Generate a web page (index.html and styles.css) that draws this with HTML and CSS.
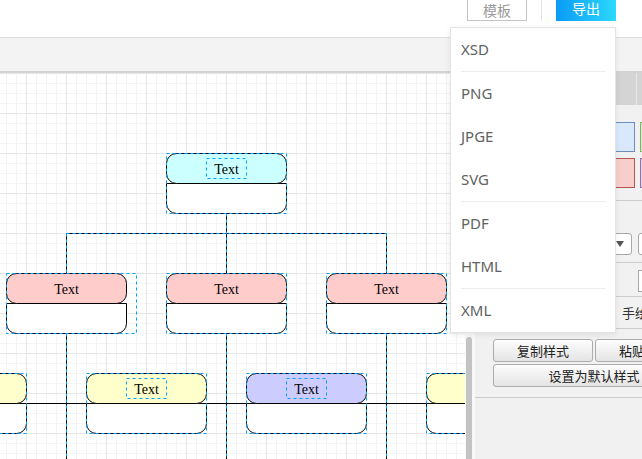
FILE: index.html
```html
<!DOCTYPE html>
<html lang="zh">
<head>
<meta charset="utf-8">
<title>流程图编辑器</title>
<link rel="stylesheet" href="styles.css">
</head>
<body>
<header class="topbar">
  <div class="top-actions">
    <button class="btn-outline">模板</button>
    <span class="vsep"></span>
    <button class="btn-primary">导出</button>
  </div>
  <div class="export-menu">
    <div class="menu-item">XSD</div>
    <div class="menu-sep"></div>
    <div class="menu-item">PNG</div>
    <div class="menu-item">JPGE</div>
    <div class="menu-item">SVG</div>
    <div class="menu-sep"></div>
    <div class="menu-item">PDF</div>
    <div class="menu-item">HTML</div>
    <div class="menu-sep"></div>
    <div class="menu-item">XML</div>
  </div>
</header>
<div class="toolbar"></div>
<main class="main">
  <div class="canvas">
    <svg class="diagram" width="465" height="386" viewBox="0 73 465 386" xmlns="http://www.w3.org/2000/svg">
      <path class="edge" d="M226.5,213.5 V273.5 M66.5,233.5 H386.5 M66.5,233.5 V273.5 M386.5,233.5 V273.5 M66.5,333.5 V460 M226.5,333.5 V460 M386.5,333.5 V460"/>
      <path class="edge-sel" d="M226.5,213.5 V273.5 M66.5,233.5 H386.5 M66.5,233.5 V273.5 M386.5,233.5 V273.5 M66.5,333.5 V460 M226.5,333.5 V460 M386.5,333.5 V460"/>
      <path class="edge" d="M26.5,403.5 H86.5 M206.5,403.5 H246.5 M366.5,403.5 H426.5"/>

      <path class="body" d="M166.5,183.5 H286.5 V203.5 A10,10 0 0 1 276.5,213.5 H176.5 A10,10 0 0 1 166.5,203.5 Z"/>
      <rect class="hdr c-cyan" x="166.5" y="153.5" width="120" height="30" rx="10"/>

      <path class="body" d="M6.5,303.5 H126.5 V323.5 A10,10 0 0 1 116.5,333.5 H16.5 A10,10 0 0 1 6.5,323.5 Z"/>
      <rect class="hdr c-pink" x="6.5" y="273.5" width="120" height="30" rx="10"/>
      <path class="body" d="M166.5,303.5 H286.5 V323.5 A10,10 0 0 1 276.5,333.5 H176.5 A10,10 0 0 1 166.5,323.5 Z"/>
      <rect class="hdr c-pink" x="166.5" y="273.5" width="120" height="30" rx="10"/>
      <path class="body" d="M326.5,303.5 H446.5 V323.5 A10,10 0 0 1 436.5,333.5 H336.5 A10,10 0 0 1 326.5,323.5 Z"/>
      <rect class="hdr c-pink" x="326.5" y="273.5" width="120" height="30" rx="10"/>

      <path class="body" d="M-93.5,403.5 H26.5 V423.5 A10,10 0 0 1 16.5,433.5 H-83.5 A10,10 0 0 1 -93.5,423.5 Z"/>
      <rect class="hdr c-yellow" x="-93.5" y="373.5" width="120" height="30" rx="10"/>
      <path class="body" d="M86.5,403.5 H206.5 V423.5 A10,10 0 0 1 196.5,433.5 H96.5 A10,10 0 0 1 86.5,423.5 Z"/>
      <rect class="hdr c-yellow" x="86.5" y="373.5" width="120" height="30" rx="10"/>
      <path class="body" d="M246.5,403.5 H366.5 V423.5 A10,10 0 0 1 356.5,433.5 H256.5 A10,10 0 0 1 246.5,423.5 Z"/>
      <rect class="hdr c-purple" x="246.5" y="373.5" width="120" height="30" rx="10"/>
      <path class="body" d="M426.5,403.5 H546.5 V423.5 A10,10 0 0 1 536.5,433.5 H436.5 A10,10 0 0 1 426.5,423.5 Z"/>
      <rect class="hdr c-yellow" x="426.5" y="373.5" width="120" height="30" rx="10"/>

      <rect class="sel" x="166.5" y="153.5" width="120" height="60"/>
      <rect class="sel" x="6.5" y="273.5" width="130" height="60"/>
      <rect class="sel" x="166.5" y="273.5" width="120" height="60"/>
      <rect class="sel" x="326.5" y="273.5" width="120" height="60"/>
      <rect class="sel" x="-93.5" y="373.5" width="120" height="60"/>
      <rect class="sel" x="86.5" y="373.5" width="120" height="60"/>
      <rect class="sel" x="246.5" y="373.5" width="120" height="60"/>
      <rect class="sel" x="426.5" y="373.5" width="120" height="60"/>

      <rect class="sel" x="206.5" y="158.5" width="40" height="20"/>
      <rect class="sel" x="126.5" y="378.5" width="40" height="20"/>
      <rect class="sel" x="286.5" y="378.5" width="40" height="20"/>

      <text class="lbl" x="226.5" y="174">Text</text>
      <text class="lbl" x="66.5" y="294">Text</text>
      <text class="lbl" x="226.5" y="294">Text</text>
      <text class="lbl" x="386.5" y="294">Text</text>
      <text class="lbl" x="146.5" y="394">Text</text>
      <text class="lbl" x="306.5" y="394">Text</text>
    </svg>
  </div>
  <div class="vscroll"><div class="thumb"></div></div>
  <aside class="panel">
    <div class="panel-inner">
      <div class="tabs">
        <div class="tab active">样式</div>
        <div class="tab">文本</div>
        <div class="tab">调整图形</div>
      </div>
      <div class="sec sec-swatches">
        <div class="swatches">
          <span class="sw sw-white"></span>
          <span class="sw sw-gray"></span>
          <span class="sw sw-blue"></span>
          <span class="sw sw-green"></span>
          <span class="sw sw-orange"></span>
          <span class="sw sw-yellow"></span>
          <span class="sw sw-red"></span>
          <span class="sw sw-purple"></span>
        </div>
      </div>
      <div class="sec sec-line">
        <div class="row">
          <span class="row-label">线条</span>
          <div class="select"><span class="caret"></span></div>
          <div class="box"></div>
        </div>
      </div>
      <div class="sec sec-opacity">
        <div class="row">
          <span class="row-label wide">透明度</span>
          <div class="box tall"></div>
        </div>
      </div>
      <div class="sec sec-checks">
        <label class="check"><span class="cb"></span>阴影</label>
        <label class="check"><span class="cb"></span>手绘</label>
      </div>
      <div class="sec sec-buttons">
        <div class="btn-row">
          <button class="pbtn">复制样式</button>
          <button class="pbtn">粘贴样式</button>
        </div>
        <button class="pbtn full">设置为默认样式</button>
      </div>
    </div>
  </aside>
</main>
</body>
</html>
```
FILE: styles.css
```css
html, body {
  margin: 0;
  padding: 0;
}
body {
  width: 642px;
  height: 459px;
  overflow: hidden;
  background: #fff;
  font-family: "Noto Sans CJK SC", "Noto Sans", sans-serif;
}

/* top bar */
.topbar {
  position: relative;
  height: 37px;
  border-bottom: 1px solid #dedede;
  display: flex;
  justify-content: flex-end;
  align-items: flex-start;
  padding-right: 26px;
}
.top-actions {
  display: flex;
  align-items: flex-start;
  gap: 14px;
}
.btn-outline {
  width: 60px;
  height: 21px;
  box-sizing: border-box;
  border: 1px solid #c4c4c4;
  border-top: none;
  background: #fff;
  color: #9a9a9a;
  font-family: "Noto Sans CJK SC", sans-serif;
  font-size: 14px;
  line-height: 16px;
  padding: 0;
}
.vsep {
  width: 1px;
  height: 21px;
  background: #e4e4e4;
}
.btn-primary {
  width: 60px;
  height: 21px;
  box-sizing: border-box;
  border: none;
  background: linear-gradient(to right, #0a9bf6, #2cd9fc);
  color: #fff;
  font-family: "Noto Sans CJK SC", sans-serif;
  font-size: 14px;
  line-height: 15px;
  padding: 0 0 5px 0;
}

/* export dropdown */
.export-menu {
  position: absolute;
  left: 450px;
  top: 27px;
  width: 166px;
  box-sizing: border-box;
  border: 1px solid #e3e3e3;
  background: #fff;
  box-shadow: 0 2px 6px rgba(0, 0, 0, 0.08);
  z-index: 10;
}
.menu-item {
  height: 43px;
  line-height: 43px;
  padding-left: 10px;
  font-family: "Noto Sans", sans-serif;
  font-size: 15px;
  color: #626262;
}
.menu-sep {
  height: 1px;
  background: #ececec;
  margin: 0 9px 0 10px;
}

/* toolbar */
.toolbar {
  height: 33px;
  background: #f3f3f3;
  border-bottom: 2px solid #d3d3d3;
}

/* main */
.main {
  display: flex;
  height: 386px;
}
.canvas {
  width: 465px;
  flex: none;
  height: 386px;
  overflow: hidden;
  background-color: #fff;
  background-image:
    linear-gradient(90deg, #e6e6e6 1px, transparent 1px),
    linear-gradient(180deg, #e6e6e6 1px, transparent 1px),
    linear-gradient(90deg, #f4f4f4 1px, transparent 1px),
    linear-gradient(180deg, #f4f4f4 1px, transparent 1px);
  background-size: 40px 40px, 40px 40px, 10px 10px, 10px 10px;
  background-position: 26px 0, 0 0, 6px 0, 0 0;
}
.diagram {
  display: block;
}
.edge {
  fill: none;
  stroke: #000;
  stroke-width: 1;
}
.edge-sel {
  fill: none;
  stroke: #00a2ff;
  stroke-width: 1;
  stroke-dasharray: 3 3;
}
.body {
  fill: #fff;
  stroke: #000;
  stroke-width: 1;
}
.hdr {
  stroke: #000;
  stroke-width: 1;
}
.c-cyan { fill: #ccffff; }
.c-pink { fill: #ffcccc; }
.c-yellow { fill: #ffffcc; }
.c-purple { fill: #ccccff; }
.sel {
  fill: none;
  stroke: #00a2ff;
  stroke-width: 1;
  stroke-dasharray: 3 3;
}
.lbl {
  font-family: "Liberation Serif", serif;
  font-size: 14px;
  fill: #000;
  text-anchor: middle;
}

.vscroll {
  width: 10px;
  flex: none;
  background: #f8f8f8;
  padding-top: 264px;
  box-sizing: border-box;
}
.thumb {
  width: 6px;
  height: 100%;
  margin-left: 1px;
  background: #c3c3c3;
  border-radius: 3px 3px 0 0;
}

/* right panel */
.panel {
  flex: 1;
  min-width: 0;
  background: #f1f1f1;
  overflow: hidden;
}
.panel-inner {
  width: 260px;
  font-size: 13px;
  color: #222;
}
.tabs {
  display: flex;
  height: 32px;
  background: #d4d4d4;
}
.tab {
  width: 80px;
  border-right: 1px solid #e6e6e6;
  text-align: center;
  line-height: 32px;
  color: #444;
}
.tab.active {
  background: #f1f1f1;
}
.sec {
  border-bottom: 1px solid #cbcbcb;
  padding-left: 30px;
}
.sec-swatches {
  padding-top: 17px;
  padding-bottom: 12px;
}
.swatches {
  display: grid;
  grid-template-columns: repeat(4, 40px);
  grid-auto-rows: 30px;
  column-gap: 5px;
  row-gap: 6px;
}
.sw {
  box-sizing: border-box;
  border: 1px solid;
}
.sw-white { background: #ffffff; border-color: #000000; }
.sw-gray { background: #f5f5f5; border-color: #666666; }
.sw-blue { background: #dae8fc; border-color: #6c8ebf; }
.sw-green { background: #d5e8d4; border-color: #82b366; }
.sw-orange { background: #ffe6cc; border-color: #d79b00; }
.sw-yellow { background: #fff2cc; border-color: #d6b656; }
.sw-red { background: #f8cecc; border-color: #b85450; }
.sw-purple { background: #e1d5e7; border-color: #9673a6; }

.row {
  display: flex;
  align-items: center;
  gap: 6px;
}
.row-label {
  width: 49px;
  line-height: 22px;
}
.row-label.wide {
  width: 127px;
}
.sec-line {
  padding-top: 32px;
  padding-bottom: 7px;
}
.select {
  width: 72px;
  height: 22px;
  box-sizing: border-box;
  border: 1px solid #a8a8a8;
  border-radius: 3px;
  background: #fff;
  display: flex;
  justify-content: flex-end;
  align-items: center;
  padding-right: 7px;
}
.caret {
  width: 0;
  height: 0;
  border-left: 4px solid transparent;
  border-right: 4px solid transparent;
  border-top: 6px solid #555;
}
.box {
  width: 40px;
  height: 22px;
  box-sizing: border-box;
  border: 1px solid #a8a8a8;
  border-radius: 3px;
  background: #fff;
}
.box.tall {
  border-radius: 0;
}
.sec-opacity {
  padding-top: 7px;
  padding-bottom: 4px;
}
.sec-checks {
  display: flex;
  height: 31px;
  align-items: center;
}
.check {
  width: 94px;
  display: flex;
  align-items: center;
  gap: 10px;
  line-height: 31px;
  color: #333;
}
.cb {
  width: 13px;
  height: 13px;
  box-sizing: border-box;
  border: 1px solid #888;
  border-radius: 2px;
  background: #fff;
}
.sec-buttons {
  padding: 10px 0 10px 18px;
  display: flex;
  flex-direction: column;
  gap: 2px;
}
.btn-row {
  display: flex;
  gap: 2px;
}
.pbtn {
  width: 100px;
  height: 23px;
  box-sizing: border-box;
  border: 1px solid #acacac;
  border-radius: 3px;
  background: linear-gradient(#fdfdfd, #e4e4e4);
  font-family: "Noto Sans CJK SC", sans-serif;
  font-size: 13px;
  color: #222;
  padding: 0;
  line-height: 21px;
}
.pbtn.full {
  width: 202px;
}
```
